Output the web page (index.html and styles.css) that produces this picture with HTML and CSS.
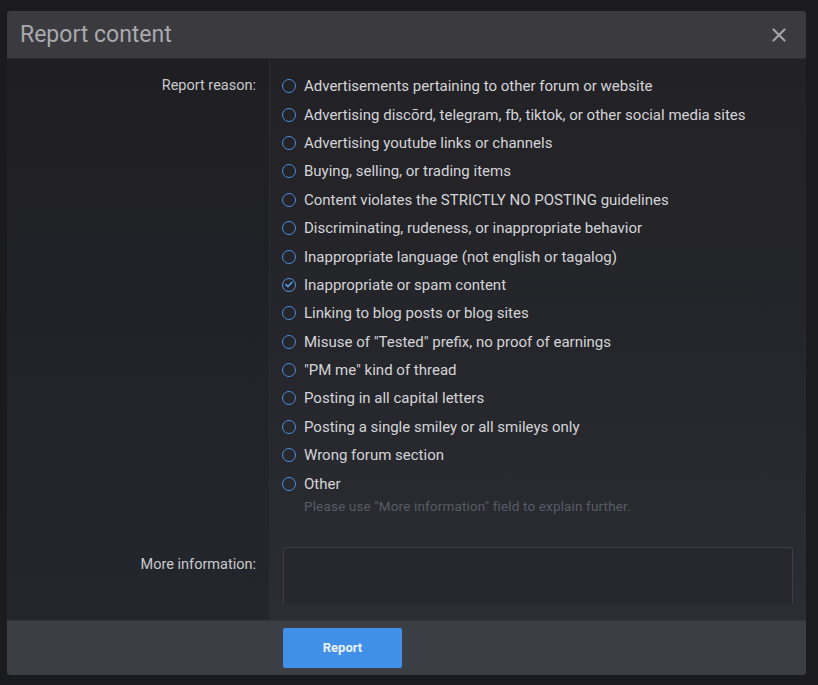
FILE: index.html
```html
<!DOCTYPE html>
<html lang="en">
  <head>
    <meta charset="UTF-8" />
    <meta name="viewport" content="width=device-width, initial-scale=1.0" />
    <link rel="stylesheet" href="styles.css">
    <title>Report content</title>
  </head>
  <body>
    <div class="overlay">
      <form class="modal">
        <div class="modal__header">
          <h2 class="modal__title">Report content</h2>
          <a class="modal__close" href="#" aria-label="Close">
            <svg width="14" height="14" viewBox="0 0 14 14">
              <path d="M1.5 1.5 L12.5 12.5 M12.5 1.5 L1.5 12.5" stroke="#a3a3a8" stroke-width="2.2" stroke-linecap="round" fill="none" />
            </svg>
          </a>
        </div>

        <div class="modal__body">
          <div class="form-row form-row--reasons">
            <div class="form-row__label">Report reason:</div>
            <div class="form-row__input">
              <ul class="reasons">
                <li class="reason"><span class="radio"></span>Advertisements pertaining to other forum or website</li>
                <li class="reason"><span class="radio"></span>Advertising discōrd, telegram, fb, tiktok, or other social media sites</li>
                <li class="reason"><span class="radio"></span>Advertising youtube links or channels</li>
                <li class="reason"><span class="radio"></span>Buying, selling, or trading items</li>
                <li class="reason"><span class="radio"></span>Content violates the STRICTLY NO POSTING guidelines</li>
                <li class="reason"><span class="radio"></span>Discriminating, rudeness, or inappropriate behavior</li>
                <li class="reason"><span class="radio"></span>Inappropriate language (not english or tagalog)</li>
                <li class="reason">
                  <span class="radio radio--checked">
                    <svg width="8" height="7" viewBox="0 0 8 7"><path d="M1 3.6 L3 5.6 L7 1.2" stroke="#5a9be6" stroke-width="1.5" fill="none" stroke-linecap="round" stroke-linejoin="round" /></svg>
                  </span>Inappropriate or spam content
                </li>
                <li class="reason"><span class="radio"></span>Linking to blog posts or blog sites</li>
                <li class="reason"><span class="radio"></span>Misuse of "Tested" prefix, no proof of earnings</li>
                <li class="reason"><span class="radio"></span>"PM me" kind of thread</li>
                <li class="reason"><span class="radio"></span>Posting in all capital letters</li>
                <li class="reason"><span class="radio"></span>Posting a single smiley or all smileys only</li>
                <li class="reason"><span class="radio"></span>Wrong forum section</li>
                <li class="reason"><span class="radio"></span>Other</li>
              </ul>
              <div class="reasons__hint">Please use "More information" field to explain further.</div>
            </div>
          </div>

          <div class="form-row form-row--info">
            <div class="form-row__label">More information:</div>
            <div class="form-row__input">
              <textarea class="info-box"></textarea>
            </div>
          </div>
        </div>

        <div class="modal__footer">
          <button type="button" class="button">Report</button>
        </div>
      </form>
    </div>
  </body>
</html>
```

FILE: styles.css
```css
* {
  margin: 0;
  padding: 0;
  box-sizing: border-box;
}

html,
body {
  height: 100%;
}

body {
  font-family: Roboto, "Liberation Sans", sans-serif;
  background: #1b1a1f;
  color: #d2d2d6;
  overflow: hidden;
}

.overlay {
  padding: 11px 12px 10px 7px;
}

.modal {
  border-radius: 3px;
  overflow: hidden;
  background: #242329;
}

/* header */
.modal__header {
  height: 48px;
  display: flex;
  align-items: center;
  justify-content: space-between;
  padding: 0 20px 0 13px;
  background: #3a3a3f;
  border-bottom: 1px solid #2b2b30;
}

.modal__title {
  font-size: 23px;
  font-weight: 400;
  color: #a9a9ae;
}

.modal__close {
  display: flex;
}

/* body: left label column and right input column share one backdrop */
.modal__body {
  background:
    linear-gradient(180deg, #1f1e23 0%, #212328 55%, #23272d 100%) 0 0 / 263px 100% no-repeat,
    linear-gradient(180deg, #222126 0%, #25262b 50%, #2a2d34 100%);
}

.form-row {
  display: grid;
  grid-template-columns: 263px 1fr;
}

.form-row__label {
  text-align: right;
  padding-right: 13px;
  font-size: 14.5px;
  color: #c9c9cd;
  border-right: 1px solid #2c2c31;
}

.form-row__input {
  padding-left: 13px;
  padding-right: 13px;
}

.form-row--reasons .form-row__label,
.form-row--reasons .form-row__input {
  padding-top: 13px;
  padding-bottom: 16px;
}

.form-row--reasons .form-row__label {
  line-height: 28.4px;
}

.form-row--info .form-row__label {
  padding-top: 25px;
  line-height: 20px;
}

.form-row--info .form-row__input {
  padding-top: 17px;
  padding-bottom: 17px;
}

.reasons {
  list-style: none;
}

.reason {
  height: 28.4px;
  display: flex;
  align-items: center;
  font-size: 15px;
  color: #d4d4d8;
}

.radio {
  width: 14px;
  height: 14px;
  border: 1.8px solid #4b8fdf;
  border-radius: 50%;
  margin-left: -1px;
  margin-right: 8px;
  flex-shrink: 0;
  display: flex;
  align-items: center;
  justify-content: center;
}

.radio--checked {
  border-color: #5593de;
}

.reasons__hint {
  font-size: 13.5px;
  letter-spacing: 0.15px;
  line-height: 16px;
  color: #595c64;
  padding-left: 21px;
}

.info-box {
  display: block;
  width: 100%;
  height: 56px;
  resize: none;
  background: #26282d;
  border: 1px solid #3d3f45;
  border-bottom: none;
  border-radius: 3px 3px 0 0;
}

/* footer */
.modal__footer {
  height: 55px;
  padding: 7px 0 0 276px;
  background: #3b3e45;
  border-top: 1px solid #34363c;
}

.button {
  width: 119px;
  height: 40px;
  border: none;
  border-radius: 2px;
  background: #4190e8;
  color: #e9f0fa;
  font-family: Roboto, "Liberation Sans", sans-serif;
  font-size: 13px;
  font-weight: 700;
}
```
